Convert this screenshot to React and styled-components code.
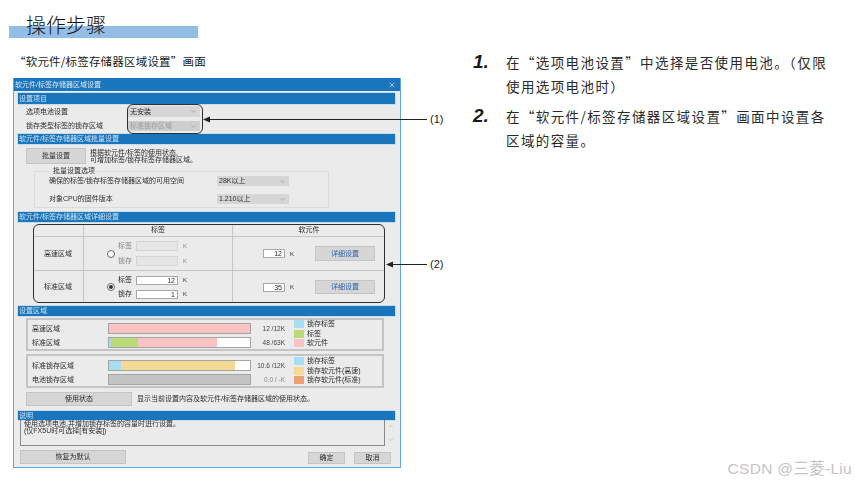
import React from "react";
import styled, { createGlobalStyle } from "styled-components";
import { ChevronDown, ChevronUp, X } from "lucide-react";

const Global = createGlobalStyle`
  html, body { margin: 0; padding: 0; background: #fff; }
  body { font-family: "Noto Sans CJK SC", "Liberation Sans", sans-serif; }
  * { box-sizing: border-box; }
`;
const CJK = `"Noto Sans CJK SC", "Liberation Sans", sans-serif`;
const LATIN = `"Liberation Sans", "Noto Sans CJK SC", sans-serif`;

const Page = styled.div`
  position: relative; width: 855px; height: 483px; overflow: hidden;
  display: flex; background: #fff; color: #222; font-family: ${CJK};
`;
const LeftColumn = styled.div`position: relative; width: 473px; flex: none; padding-top: 12px;`;
const Title = styled.h1`
  position: relative; margin: 0 0 0 26px; height: 26px; font-size: 20px; line-height: 25px;
  font-weight: 300; color: #111; letter-spacing: 0;
  &::before { content: ""; position: absolute; z-index: 0; left: -17px; top: 14px; width: 189px; height: 12px; background: #94bde6; }
  span { position: relative; }
`;
const Caption = styled.div`
  margin: 15px 0 0 14px; height: 16px; font-size: 11.5px; line-height: 16px; letter-spacing: .2px; color: #1a1a1a; font-weight: 400;
`;
const Dialog = styled.div`
  position: relative; margin: 9px 0 0 13px; width: 388px; height: 390px; background: #ebebeb;
  border: 1px solid #6aa5d8; border-top: 0; display: flex; flex-direction: column;
  font-family: ${LATIN}; font-size: 7px; line-height: 8px; color: #2c2c2c; filter: blur(.3px);
`;
const TitleBar = styled.div`
  height: 13px; flex: none; background: #1a76bc; color: #dce9f4; padding: 0 4px 0 1px;
  display: flex; align-items: center; justify-content: space-between; font-size: 7px;
`;
const SectionBar = styled.div`
  flex: none; height: ${p => p.$h || 10}px; margin: ${p => p.$top || 0}px 5px 0 4px; background: #1a76bc;
  color: #cfe2f2; padding-left: 1px; display: flex; align-items: center;
  box-shadow: 0 0 0 .5px #a9cbe8;
`;
const Panel = styled.div`position: relative; flex: none; height: ${p => p.$h}px;`;

const FormGrid = styled.div`
  display: grid; grid-template-columns: ${p => p.$label}px 72px; row-gap: ${p => p.$gap}px; align-items: center;
  padding: ${p => p.$pad || "2px 0 0 12px"};
`;
const SelectBox = styled.div`
  height: ${p => p.$h || 10}px; background: ${p => (p.$off ? "#cecece" : "#d6d6d6")}; color: ${p => (p.$off ? "#9a9a9a" : "#2c2c2c")};
  display: flex; align-items: center; justify-content: space-between; padding: 0 3px 0 2px;
  svg { color: #8a8a8a; }
`;
const Btn = styled.div`
  flex: none; width: ${p => p.$w}px; height: ${p => p.$h}px; background: #d6d6d6; border: 1px solid #c4c4c4;
  display: flex; align-items: center; justify-content: center; color: ${p => p.$blue ? "#2e5fa8" : "#2c2c2c"};
`;
const BulkRow = styled.div`display: flex; align-items: center; gap: 4px; padding: 4px 0 0 12px;`;
const Lines = styled.div`line-height: 7px; font-size: 7px;`;
const Group = styled.fieldset`
  margin: 3px 0 0 20px; padding: 1px 0 0 14px; width: 295px; height: 41px; border: 1px solid #dcdcdc;
  legend { font-size: 7px; line-height: 8px; padding: 0 2px; margin-left: 2px; }
`;

const Table = styled.div`
  margin: 2px 0 0 19px; width: 352px; height: 79px; display: grid;
  grid-template-columns: 51px 149px 152px; grid-template-rows: 13px 34px 32px;
`;
const Cell = styled.div`
  display: flex; align-items: center; justify-content: ${p => p.$start ? "flex-start" : "center"};
  padding-left: ${p => p.$pl || 0}px;
  border-right: ${p => p.$last ? 0 : "1px solid #c6c6c6"}; border-bottom: ${p => p.$end ? 0 : "1px solid #c6c6c6"};
`;
const Radio = styled.span`
  flex: none; width: 8px; height: 8px; border-radius: 50%; background: #fff; border: 1px solid #666; margin-right: 3px;
  display: flex; align-items: center; justify-content: center;
  &::after { content: ""; width: 4px; height: 4px; border-radius: 50%; background: ${p => p.$on ? "#333" : "transparent"}; }
`;
const Fields = styled.div`display: flex; flex-direction: column; gap: 5px;`;
const Field = styled.div`display: flex; align-items: center; color: ${p => p.$off ? "#888" : "#2c2c2c"};`;
const FieldLabel = styled.span`width: 18px; flex: none;`;
const Input = styled.div`
  flex: none; width: ${p => p.$w}px; height: ${p => p.$h}px; text-align: right; padding-right: 2px; line-height: ${p => p.$h - 2}px;
  background: ${p => p.$off ? "#e6e6e6" : "#fff"}; border: 1px solid ${p => p.$off ? "#d4d4d4" : "#a8a8a8"};
`;
const Unit = styled.span`margin-left: 5px; width: 5px; font-size: 6px;`;
const Spacer = styled.span`width: ${p => p.$w}px; flex: none;`;

const UsageBox = styled.div`
  margin: ${p => p.$top}px 0 0 12px; width: 358px; height: ${p => p.$h}px; border: 2px solid #c4c4c4;
  display: grid; grid-template-columns: 76px 143px 34px 1fr; grid-template-rows: 11px 11px; row-gap: 3px;
  padding: ${p => p.$pt}px 0 0 4px; align-items: center;
`;
const Bar = styled.div`height: 11px; display: flex; background: ${p => p.$bg || "#fff"}; border: 1px solid #a4a4a4;`;
const Seg = styled.span`height: 100%; width: ${p => p.$w}px; background: ${p => p.$c};`;
const Stat = styled.span`text-align: right; font-size: 6.5px; color: ${p => p.$off ? "#888" : "#444"};`;
const Legend = styled.div`
  grid-column: 4; grid-row: 1 / span 2; align-self: start; margin: -3px 0 0 9px;
  display: flex; flex-direction: column; gap: 1.5px;
`;
const LegendRow = styled.div`display: flex; align-items: center; gap: 3px; height: 8px;`;
const Swatch = styled.span`width: 10px; height: 8px; background: ${p => p.$c};`;

const UsageRow = styled.div`display: flex; align-items: center; gap: 5px; margin: 4px 0 0 12px;`;
const NoteRow = styled.div`display: flex; margin-left: 6px;`;
const NoteBox = styled.div`
  width: 365px; height: 26px; border: 1px solid #8a8a8a; border-top: 0; padding: 0 3px; line-height: 7px; color: #2c2c2c;
`;
const ScrollBar = styled.div`
  width: 10px; height: 26px; margin-left: 1px; display: flex; flex-direction: column; justify-content: space-between;
  align-items: center; padding: 3px 0; color: #aaa;
`;
const FooterRow = styled.div`display: flex; align-items: flex-end; margin: 4px 9px 0 6px; gap: 9px;`;
const Grow = styled.span`flex: 1;`;

const Highlight = styled.div`
  position: absolute; left: ${p => p.$x}px; top: ${p => p.$y}px; width: ${p => p.$w}px; height: ${p => p.$h}px;
  border: 1.5px solid #2f2f2f; border-radius: 6px; pointer-events: none;
`;
const Leader = styled.svg`position: absolute; left: ${p => p.$x}px; top: ${p => p.$y}px; overflow: visible;`;
const CalloutLabel = styled.span`
  position: absolute; left: 430px; top: ${p => p.$y}px; font: 11px/14px "Liberation Sans", sans-serif; color: #222;
`;

const RightColumn = styled.div`flex: 1; padding-top: 50px; display: flex; flex-direction: column; gap: 6px;`;
const Step = styled.div`display: grid; grid-template-columns: 33px 327px; align-items: start;`;
const StepNum = styled.span`
  font: italic 700 19px/24px "Liberation Sans", sans-serif; color: #1a1a1a;
`;
const StepText = styled.p`
  margin: 0; font-size: 13.5px; line-height: 23.5px; letter-spacing: 1.4px; color: #2a2a2a; padding-top: 1px;
`;
const Watermark = styled.span`
  position: absolute; right: 3px; bottom: 6px; font: 15.5px/16px "Liberation Sans", "Noto Sans CJK SC", sans-serif;
  letter-spacing: .3px; color: #c4c4c4;
`;

const Sel = ({ children, off, h }) => (
  <SelectBox $off={off} $h={h}><span>{children}</span><ChevronDown size={7} /></SelectBox>
);
const AreaRow = ({ a, b, on, h, off }) => (
  <>
    <Radio $on={on} />
    <Fields>
      <Field $off={off}><FieldLabel>标签</FieldLabel><Input $w={42} $h={h} $off={off}>{a}</Input><Unit>K</Unit></Field>
      <Field $off={off}><FieldLabel>锁存</FieldLabel><Input $w={42} $h={h} $off={off}>{b}</Input><Unit>K</Unit></Field>
    </Fields>
  </>
);
const Soft = ({ v, h }) => (
  <>
    <Input $w={22} $h={9}>{v}</Input><Unit>K</Unit><Spacer $w={20} />
    <Btn $w={60} $h={h} $blue>详细设置</Btn>
  </>
);
const LegendList = ({ items }) => (
  <Legend>{items.map(([c, t]) => <LegendRow key={t}><Swatch $c={c} /><span>{t}</span></LegendRow>)}</Legend>
);

export default function App() {
  return (
    <Page>
      <Global />
      <LeftColumn>
        <Title><span>操作步骤</span></Title>
        <Caption>“软元件/标签存储器区域设置”画面</Caption>
        <Dialog>
          <TitleBar><span>软元件/标签存储器区域设置</span><X size={8} /></TitleBar>
          <SectionBar $h={11} $top={2}>设置项目</SectionBar>
          <Panel $h={30}>
            <FormGrid $label={102} $gap={4}>
              <span>选项电池设置</span><Sel h={11}>无安装</Sel>
              <span>锁存类型标签的锁存区域</span><Sel off>标准锁存区域</Sel>
            </FormGrid>
            <Highlight $x={113} $y={0} $w={76} $h={30} />
          </Panel>
          <SectionBar>软元件/标签存储器区域批量设置</SectionBar>
          <Panel $h={68}>
            <BulkRow>
              <Btn $w={60} $h={16}>批量设置</Btn>
              <Lines>根据软元件/标签的使用状态,<br />可增加标签/锁存标签存储器区域。</Lines>
            </BulkRow>
            <Group>
              <legend>批量设置选项</legend>
              <FormGrid $label={168} $gap={8} $pad="0">
                <span>确保的标签/锁存标签存储器区域的可用空间</span><Sel>28K以上</Sel>
                <span>对象CPU的固件版本</span><Sel>1.210以上</Sel>
              </FormGrid>
            </Group>
          </Panel>
          <SectionBar>软元件/标签存储器区域详细设置</SectionBar>
          <Panel $h={84}>
            <Table>
              <Cell />
              <Cell>标签</Cell>
              <Cell $last>软元件</Cell>
              <Cell>高速区域</Cell>
              <Cell $start $pl={23}><AreaRow off h={10} a="" b="" /></Cell>
              <Cell $start $last $pl={30}><Soft v="12" h={15} /></Cell>
              <Cell $end>标准区域</Cell>
              <Cell $end $start $pl={23}><AreaRow on h={9} a="12" b="1" /></Cell>
              <Cell $end $start $last $pl={30}><Soft v="35" h={14} /></Cell>
            </Table>
            <Highlight $x={19} $y={2} $w={352} $h={79} />
          </Panel>
          <SectionBar>设置区域</SectionBar>
          <Panel $h={95}>
            <UsageBox $top={2} $h={33} $pt={3}>
              <span>高速区域</span>
              <Bar $bg="#f9c3c3" />
              <Stat>12 /12K</Stat>
              <LegendList items={[["#a8dff0", "锁存标签"], ["#bcd977", "标签"], ["#f9c3c3", "软元件"]]} />
              <span>标准区域</span>
              <Bar><Seg $w={2} $c="#a8dff0" /><Seg $w={27} $c="#bcd977" /><Seg $w={79} $c="#f9c3c3" /></Bar>
              <Stat>48 /63K</Stat>
            </UsageBox>
            <UsageBox $top={3} $h={34} $pt={4}>
              <span>标准锁存区域</span>
              <Bar><Seg $w={12} $c="#a8dff0" /><Seg $w={114} $c="#f5da96" /></Bar>
              <Stat>10.6 /12K</Stat>
              <LegendList items={[["#a8dff0", "锁存标签"], ["#f5da96", "锁存软元件(高速)"], ["#ee9f75", "锁存软元件(标准)"]]} />
              <span>电池锁存区域</span>
              <Bar $bg="#c4c4c4" />
              <Stat $off>0.0 / -K</Stat>
            </UsageBox>
            <UsageRow>
              <Btn $w={106} $h={14}>使用状态</Btn>
              <span>显示当前设置内容及软元件/标签存储器区域的使用状态。</span>
            </UsageRow>
          </Panel>
          <SectionBar $h={9}>说明</SectionBar>
          <Panel $h={46}>
            <NoteRow>
              <NoteBox>使用选项电池,并增加锁存标签的容量时进行设置。<br />(仅FX5U时可选择[有安装])</NoteBox>
              <ScrollBar><ChevronUp size={6} /><ChevronDown size={6} /></ScrollBar>
            </NoteRow>
            <FooterRow>
              <Btn $w={106} $h={14}>恢复为默认</Btn>
              <Grow />
              <Btn $w={37} $h={12}>确定</Btn>
              <Btn $w={37} $h={12}>取消</Btn>
            </FooterRow>
          </Panel>
        </Dialog>
        <Leader $x={203} $y={119} width="224" height="1">
          <path d="M224 0.5H6" stroke="#222" strokeWidth="1" fill="none" />
          <path d="M0 0.5L7-2.5V3.5Z" fill="#222" />
        </Leader>
        <CalloutLabel $y={112}>(1)</CalloutLabel>
        <Leader $x={386} $y={264} width="41" height="1">
          <path d="M41 0.5H6" stroke="#222" strokeWidth="1" fill="none" />
          <path d="M0 0.5L7-2.5V3.5Z" fill="#222" />
        </Leader>
        <CalloutLabel $y={257}>(2)</CalloutLabel>
      </LeftColumn>
      <RightColumn>
        <Step>
          <StepNum>1.</StepNum>
          <StepText>在“选项电池设置”中选择是否使用电池。（仅限使用选项电池时）</StepText>
        </Step>
        <Step>
          <StepNum>2.</StepNum>
          <StepText>在“软元件/标签存储器区域设置”画面中设置各区域的容量。</StepText>
        </Step>
      </RightColumn>
      <Watermark>CSDN @三菱-Liu</Watermark>
    </Page>
  );
}
